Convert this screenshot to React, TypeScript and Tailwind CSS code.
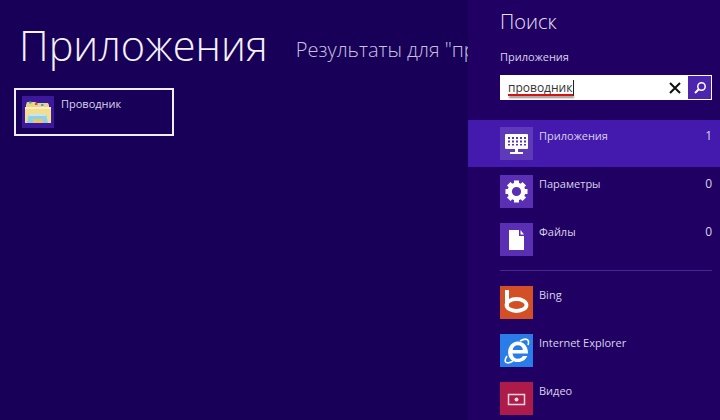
import { Fragment } from "react";

const font = { fontFamily: '"Open Sans", "Noto Sans", sans-serif' };

function DesktopIcon() {
  return (
    <svg width="33" height="33" viewBox="0 0 33 33">
      <rect x="5" y="7" width="23" height="15" rx="1" fill="#fff" />
      <g fill="#5a32b4">
        {[8, 12, 16, 20, 24].map((x) => (
          <Fragment key={x}>
            <rect x={x} y="10" width="2" height="2" />
            <rect x={x} y="13.500" width="2" height="2" />
            <rect x={x} y="17" width="2" height="1.500" />
          </Fragment>
        ))}
      </g>
      <path d="M15 22h3v3h5v2H10v-2h5z" fill="#fff" />
    </svg>
  );
}

function GearIcon() {
  const teeth = [0, 45, 90, 135, 180, 225, 270, 315];
  return (
    <svg width="33" height="33" viewBox="0 0 33 33">
      <g fill="#fff">
        {teeth.map((a) => (
          <rect key={a} x="14" y="5.500" width="5" height="5" transform={`rotate(${a} 16.5 16.5)`} />
        ))}
      </g>
      <circle cx="16.500" cy="16.500" r="6.800" fill="none" stroke="#fff" strokeWidth="4.400" />
    </svg>
  );
}

function FileIcon() {
  return (
    <svg width="33" height="33" viewBox="0 0 33 33">
      <path d="M9 7h10v6h5v14H9z" fill="#fff" />
      <path d="M20.500 7l3.500 4.500h-3.500z" fill="#fff" />
    </svg>
  );
}

function BingIcon() {
  return (
    <svg width="33" height="33" viewBox="0 0 33 33">
      <path d="M7 4v16" stroke="#fff" strokeWidth="4" fill="none" />
      <ellipse cx="16.500" cy="19" rx="10" ry="6" fill="none" stroke="#fff" strokeWidth="3.800" />
    </svg>
  );
}

function IeIcon() {
  return (
    <svg width="33" height="33" viewBox="0 0 33 33">
      <path
        d="M28 19.500H12.500c.3 3.400 2.600 5.300 5.400 5.300 2.200 0 3.900-1 4.900-2.700h4.500c-1.500 3.800-5 6-9.300 6-5.700 0-9.900-4-9.900-9.700S12 7.500 17.800 7.500c6.200 0 10.400 5 10.200 12zM12.700 16h10.200c-.3-2.900-2.200-4.800-5-4.800s-4.800 1.900-5.200 4.800z"
        fill="#fff"
        fillRule="evenodd"
      />
      <path d="M7 22C3 28 6 31 13 27M20 7c6-3.500 10-2 8 4" fill="none" stroke="#fff" strokeWidth="1.600" />
    </svg>
  );
}

function VideoIcon() {
  return (
    <svg width="33" height="33" viewBox="0 0 33 33">
      <rect x="8.500" y="12.500" width="16" height="10" fill="none" stroke="#f1d7df" strokeWidth="1.500" />
      <rect x="14.500" y="15.500" width="4" height="4" rx="2" fill="#f1d7df" />
    </svg>
  );
}

function ExplorerIcon() {
  return (
    <svg width="32" height="32" viewBox="0 0 32 32">
      <path d="M4 9l1-3h8l2 1h11l1 2v5H4z" fill="#e9d48f" />
      <rect x="7" y="5.500" width="2.500" height="2" fill="#49b85a" />
      <rect x="13" y="7" width="2.500" height="2" fill="#d2513b" />
      <rect x="19" y="8" width="2.500" height="2" fill="#4aa0d8" />
      <path d="M3 11h26v16H3z" fill="#f4dd8e" />
      <path d="M3 11h26v2H3z" fill="#fbeeb9" />
      <path d="M7 18h17l2 9H5z" fill="#8fd0e6" />
      <path d="M11 23h10v4H11z" fill="#e8c56e" />
      <path d="M7 18h17v2H7z" fill="#bfe8f3" />
    </svg>
  );
}

const groups = [
  { label: "Приложения", count: "1", icon: <DesktopIcon />, tile: "bg-[#5f3ab8]", active: true },
  { label: "Параметры", count: "0", icon: <GearIcon />, tile: "bg-[#5a2fb4]", active: false },
  { label: "Файлы", count: "0", icon: <FileIcon />, tile: "bg-[#5a2fb4]", active: false },
];

const apps = [
  { label: "Bing", icon: <BingIcon />, tile: "bg-[#d34f25]" },
  { label: "Internet Explorer", icon: <IeIcon />, tile: "bg-[#2a7de8]" },
  { label: "Видео", icon: <VideoIcon />, tile: "bg-[#ac1b4a]" },
];

export default function App() {
  return (
    <div className="flex h-[420px] w-[720px] overflow-hidden bg-[#180059] text-white" style={font}>
      <div className="w-[468px] shrink-0 overflow-hidden">
        <div className="flex h-[88px] items-start whitespace-nowrap pl-[19px] pt-[17px]">
          <h1 className="text-[41.500px] font-light leading-[56px] text-[#f4f2fa]">Приложения</h1>
          <span className="ml-[28px] mt-[19px] text-[20px] font-light leading-[27px] text-[#c9c3e0]">
            Результаты для "проводник"
          </span>
        </div>
        <div className="ml-[14px] flex h-[48px] w-[160px] items-start border-2 border-[#f0eef8] pl-[6px] pt-[6px]">
          <div className="flex h-[32px] w-[32px] shrink-0 items-center justify-center bg-[#3b189c]">
            <ExplorerIcon />
          </div>
          <span className="ml-[7px] text-[11px] leading-[16px] text-[#d8d4ea]">Проводник</span>
        </div>
      </div>

      <div className="flex-1 bg-[#210064]">
        <div className="pl-[32px] pr-[8px] pt-[8px]">
          <h2 className="text-[20px] font-light leading-[27px] text-[#e6e2f2]">Поиск</h2>
          <p className="mt-[14px] text-[11px] leading-[16px] text-[#d8d4ea]">Приложения</p>
          <div className="relative mt-[10px] flex h-[25px] items-center bg-white pl-[8px]">
            <span className="mt-px border-r border-[#222] pr-px text-[12px] leading-[16px] text-[#333]">проводник</span>
            <span className="absolute left-[8px] top-[19px] h-[2px] w-[65px] bg-[#d81010] shadow-[1px_2px_2px_#888]" />
            <svg className="ml-auto" width="14" height="14" viewBox="0 0 14 14">
              <path d="M2 2l10 10M12 2L2 12" stroke="#111" strokeWidth="2" />
            </svg>
            <div className="ml-[6px] mr-[1px] flex h-[23px] w-[23px] items-center justify-center bg-[#4d24ae]">
              <svg width="14" height="14" viewBox="0 0 14 14">
                <circle cx="8.500" cy="5.500" r="3.700" fill="none" stroke="#fff" strokeWidth="1.500" />
                <path d="M6 8l-4 4" stroke="#fff" strokeWidth="2" />
              </svg>
            </div>
          </div>
        </div>

        <div className="mt-[20px]">
          {groups.map((g) => (
            <div
              key={g.label}
              className={`mb-px flex h-[47px] items-start pl-[32px] pr-[8px] pt-[7px] ${g.active ? "bg-[#4419ae]" : ""}`}
            >
              <div className={`flex h-[33px] w-[33px] shrink-0 items-center justify-center ${g.tile}`}>{g.icon}</div>
              <span className="ml-[6px] mt-px text-[11px] leading-[16px] text-[#d8d4ea]">{g.label}</span>
              <span className="ml-auto mt-px text-[12px] leading-[16px] text-[#d8d4ea]">{g.count}</span>
            </div>
          ))}
        </div>

        <div className="ml-[32px] mr-[8px] mt-[7px] border-t border-[#46298f]" />

        <div className="mt-[8px]">
          {apps.map((a) => (
            <div key={a.label} className="flex h-[48px] items-start pl-[32px] pr-[8px] pt-[7px]">
              <div className={`flex h-[33px] w-[33px] shrink-0 items-center justify-center ${a.tile}`}>{a.icon}</div>
              <span className="ml-[6px] mt-px text-[11px] leading-[16px] text-[#d8d4ea]">{a.label}</span>
            </div>
          ))}
        </div>
      </div>
    </div>
  );
}
